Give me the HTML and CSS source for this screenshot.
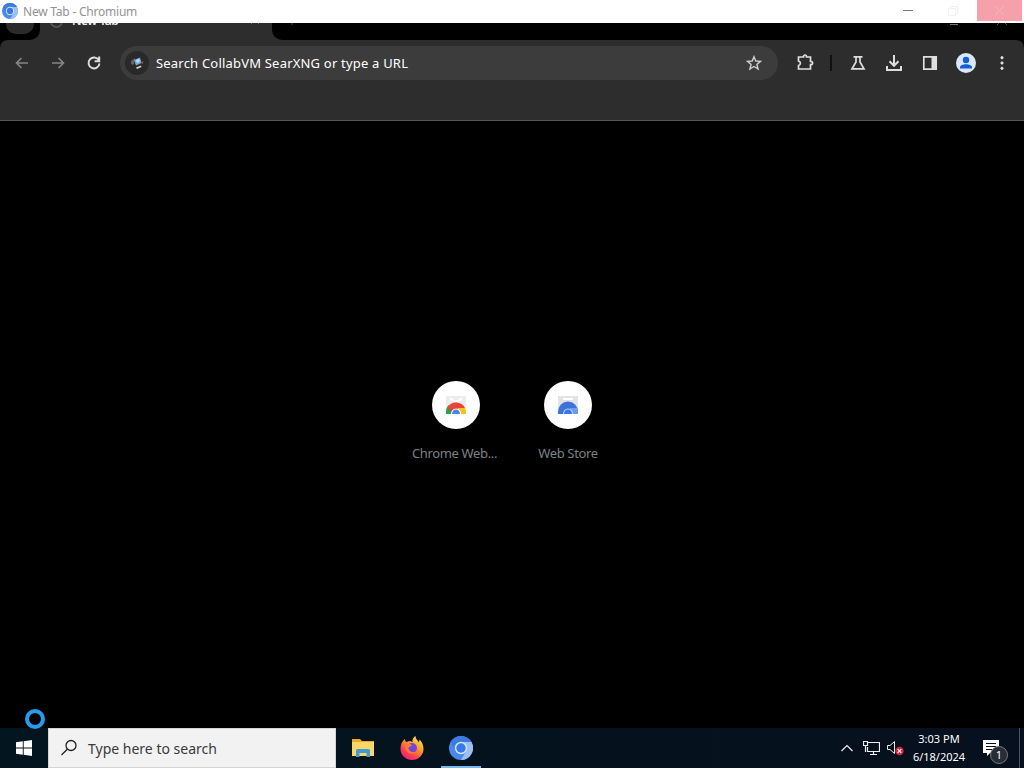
FILE: index.html
```html
<!DOCTYPE html>
<html>
<head>
    <meta charset="utf-8">
    <title>New Tab - Chromium</title>
    <link rel="stylesheet" href="styles.css">
</head>
<body>
    <svg width="0" height="0" class="defs">
        <symbol id="chromium" viewBox="0 0 24 24">
            <circle cx="12" cy="12" r="12" fill="#4a88ea" />
            <path d="M12 6H22.4A12 12 0 0 1 12 24L17.2 15Z" fill="#9dbff6" />
            <path d="M1.6 6A12 12 0 0 1 22.4 6H12L6.8 15Z" fill="#3c7be2" />
            <circle cx="12" cy="12" r="6.2" fill="#d5e4fc" />
            <circle cx="12" cy="12" r="4.7" fill="#347ae8" />
        </symbol>
    </svg>
    <div class="titlebar">
        <svg class="app-icon"><use href="#chromium" /></svg>
        <span class="title">New Tab - Chromium</span>
        <div class="controls">
            <svg class="min" viewBox="0 0 46 22"><path d="M18 10.500H28" stroke="#777" /></svg>
            <svg class="max" viewBox="0 0 46 22"><path d="M17.500 8.500H24.500V15.500H17.500ZM19.500 8V6.500H26.500V13.500H25" fill="none" stroke="#f0f0f0" /></svg>
            <svg class="close" viewBox="0 0 45 21"><path d="M18 6L27 15M27 6L18 15" stroke="#f3b6bd" /></svg>
        </div>
    </div>
    <div class="tabstrip">
        <div class="strip-left"><div class="tab-search"></div></div>
        <div class="tab">
            <div class="favicon"></div>
            <span class="tab-title">New Tab</span>
            <svg class="tab-close" viewBox="0 0 12 12"><path d="M1 1L3 -1M7 -1L9 1" stroke="#777" /></svg>
        </div>
        <div class="strip-right">
            <svg viewBox="0 0 752 17"><path d="M20 0V2" stroke="#555" /><path d="M678 1.500H686" stroke="#777" /><path d="M725 2L727 0M733 0L735 2" stroke="#555" /></svg>
        </div>
    </div>
    <div class="toolbar">
        <div class="row">
            <svg class="icon dim" viewBox="0 0 16 16"><path d="M14 8H2.500M7.500 3L2.500 8L7.500 13" /></svg>
            <svg class="icon dim" viewBox="0 0 16 16"><path d="M2 8H13.500M8.500 3L13.500 8L8.500 13" /></svg>
            <svg class="icon reload" viewBox="0 0 16 16"><path d="M12.700 5A5.500 5.500 0 1 0 13.500 8.500M13.200 1.500V6.200H8.600" /></svg>
            <div class="omnibox">
                <div class="engine">
                    <svg viewBox="0 0 16 16">
                        <path d="M2 6L6 3L5 9L3 10Z" fill="#596575" />
                        <path d="M5 5L11 2.500L12.500 8L7 10.500Z" fill="#78aad8" />
                        <path d="M7 5L10 4L11 6L8 8Z" fill="#c4dff2" />
                        <path d="M1.500 7L4 8L3 9.500ZM12 7.500L14.500 6L13.500 9Z" fill="#b65e2c" />
                        <path d="M7 12.500L12 10.500L12.500 12L8 14Z" fill="#d8d2bb" />
                    </svg>
                </div>
                <span class="hint">Search CollabVM SearXNG or type a URL</span>
                <svg class="star" viewBox="0 0 16 16"><path d="M8 1.700L9.800 6L14.500 6.400L10.900 9.400L12.100 14L8 11.500L3.900 14L5.100 9.400L1.500 6.400L6.200 6Z" /></svg>
            </div>
            <svg class="icon ext" viewBox="0 0 18 18"><path d="M3.500 4H7.500C7.500 1.300 10.500 1.300 10.500 4H14.500V8.300C17.300 8.300 17.300 11.700 14.500 11.700V16H2.500V12.500C5 12 5 8.500 2.500 8V4Z" /></svg>
            <div class="divider"></div>
            <svg class="icon flask" viewBox="0 0 16 16"><path d="M3.500 1.800H12.500M6 2V7L2 13.800H14L10 7V2" /></svg>
            <svg class="icon download" viewBox="0 0 18 18"><path d="M9 1V11.500M4.500 7.300L9 11.800L13.500 7.300M2 12V16H16V12" /></svg>
            <svg class="icon panel" viewBox="0 0 16 16"><path d="M1.800 1.800H14.200V14.200H1.800Z" /><path d="M9.500 2H14V14H9.500Z" fill="#dedede" stroke="none" /></svg>
            <svg class="avatar" viewBox="0 0 20 20">
                <circle cx="10" cy="10" r="10" fill="#dce7fd" />
                <circle cx="10" cy="7" r="3.200" fill="#1260d2" />
                <path d="M4 15.500V14.200C4 10.300 16 10.300 16 14.200V15.500Z" fill="#1260d2" />
            </svg>
            <svg class="icon dots" viewBox="0 0 16 16"><circle cx="8" cy="2.700" r="1.200" /><circle cx="8" cy="8" r="1.200" /><circle cx="8" cy="13.300" r="1.200" /></svg>
        </div>
    </div>
    <div class="page">
        <div class="tile">
            <div class="tile-icon">
                <svg viewBox="0 0 24 24">
                    <path d="M2 3H22V21H2Z" fill="#ececec" />
                    <path d="M7 5C7 9 17 9 17 5" fill="none" stroke="#fff" stroke-width="2" />
                    <path d="M2 21V18A10 10 0 0 1 4.500 12L10 21Z" fill="#2ba24c" />
                    <path d="M3.500 14.500A10 10 0 0 1 21 15L12 16L7.500 19Z" fill="#e94435" />
                    <path d="M14 15H21A10 10 0 0 1 22 21H14Z" fill="#fbc116" />
                    <path d="M7 21A5 5.500 0 0 1 17 21Z" fill="#fff" />
                    <path d="M8 21A4 4.500 0 0 1 16 21Z" fill="#4285f4" />
                </svg>
            </div>
            <span class="tile-name first">Chrome Web...</span>
        </div>
        <div class="tile">
            <div class="tile-icon">
                <svg viewBox="0 0 24 24">
                    <path d="M2 3H22V21H2Z" fill="#e3e3e3" />
                    <path d="M7 5H17V7H7Z" fill="#fff" />
                    <path d="M2 21V19A10 10.500 0 0 1 22 19V21Z" fill="#3c74dd" />
                    <path d="M14 15H21A10 10 0 0 1 22 21H14Z" fill="#6d9df0" />
                    <path d="M7 21A5 5.500 0 0 1 17 21Z" fill="#bcd5fb" />
                    <path d="M8 21A4 4.500 0 0 1 16 21Z" fill="#3978e6" />
                </svg>
            </div>
            <span class="tile-name">Web Store</span>
        </div>
        <div class="busy"></div>
    </div>
    <div class="taskbar">
        <div class="start">
            <svg viewBox="0 0 16 16"><path d="M0 2.300L6.800 1.300V7.500H0ZM7.700 1.200L16 0V7.500H7.700ZM0 8.400H6.800V14.700L0 13.700ZM7.700 8.400H16V16L7.700 14.800Z" /></svg>
        </div>
        <div class="search">
            <svg viewBox="0 0 18 18"><circle cx="11" cy="6.500" r="5" /><path d="M7.300 10.300L1.500 16" /></svg>
            <span>Type here to search</span>
        </div>
        <div class="apps">
            <div class="app">
                <svg class="explorer" viewBox="0 0 22 20">
                    <path d="M0 1H8L10 3H22V18H0Z" fill="#e9ac25" />
                    <path d="M0 4H22V18H0Z" fill="#fcd765" />
                    <path d="M4 19V12.500Q4 11 5.500 11H16.500Q18 11 18 12.500V19H14.500V15H7.500V19Z" fill="#3e9bd6" />
                </svg>
            </div>
            <div class="app">
                <svg class="firefox" viewBox="0 0 24 24">
                    <defs><linearGradient id="fox" x1=".85" y1="0" x2=".2" y2="1"><stop offset="0" stop-color="#fff04b" /><stop offset=".4" stop-color="#ff9b2b" /><stop offset=".75" stop-color="#fb3b55" /><stop offset="1" stop-color="#e51f83" /></linearGradient></defs>
                    <path d="M3 5L4.500 3L6 6L10 5L12.500 6C12 3.500 13.500 1 15.500 0C15.500 3 17.500 4 19 6.500L19.500 3.500C22 6 23.500 9 23.500 13A11.500 11 0 0 1 .5 13C.5 10 1 7 3 5Z" fill="url(#fox)" />
                    <circle cx="12" cy="12" r="5" fill="#7545d6" />
                    <path d="M5 7.500L10.500 8L12 9.500L8.500 11.500C8 15 12 17 16 15.500C14 19 6 18 5.500 13Z" fill="#ff7a35" />
                </svg>
            </div>
            <div class="app active"><svg class="cr"><use href="#chromium" /></svg></div>
        </div>
        <div class="tray">
            <svg class="chevron" viewBox="0 0 12 8"><path d="M.5 7L6 1.500L11.500 7" /></svg>
            <svg class="network" viewBox="0 0 17 16"><path d="M5 2.500H16.500V11.500H4.500V7M10.500 11.500V14.500M7 14.500H14M.5 1.500H4.500V5.500H.5ZM2.500 5.500V12" /></svg>
            <svg class="volume" viewBox="0 0 18 16">
                <path d="M.5 5.500H3L7.500 1.500V13.500L3 9.500H.5Z" fill="none" stroke="#e8e8e8" />
                <circle cx="12.500" cy="11" r="4.200" fill="#d9253a" />
                <path d="M10.700 9.200L14.300 12.800M14.300 9.200L10.700 12.800" stroke="#fff" stroke-width="1.200" />
            </svg>
            <div class="clock"><span class="time">3:03 PM</span><span class="date">6/18/2024</span></div>
            <div class="notify">
                <svg viewBox="0 0 16 16"><path d="M0 0H16V13H7L4 16V13H0Z" fill="#fff" /><path d="M3 3.500H13M3 6.500H13M3 9.500H9" stroke="#07101e" /></svg>
                <span class="badge">1</span>
            </div>
            <div class="peek"></div>
        </div>
    </div>
</body>
</html>
```
FILE: styles.css
```css
body {
    margin: 0;
    width: 1024px;
    height: 768px;
    overflow: hidden;
    display: flex;
    flex-direction: column;
    background: #000;
    font-family: "Noto Sans", "Open Sans", sans-serif;
}

svg {
    display: block;
    flex: none;
}

.defs {
    position: absolute;
}

.titlebar {
    height: 23px;
    flex: none;
    display: flex;
    background: #fff;
}

.app-icon {
    width: 16px;
    height: 16px;
    margin: 3px 5px 0 2px;
}

.title {
    font-size: 12px;
    line-height: 23px;
    letter-spacing: -0.22px;
    color: #929292;
    white-space: nowrap;
}

.controls {
    display: flex;
    margin-left: auto;
    padding-right: 2px;
}

    .controls svg {
        width: 46px;
        height: 22px;
    }

    .controls .close {
        width: 45px;
        height: 21px;
        background: #f6a0ac;
    }

.tabstrip {
    height: 17px;
    flex: none;
    display: flex;
    background: #2d2d2d;
    overflow: hidden;
}

.strip-left {
    width: 40px;
    background: #000;
    border-bottom-right-radius: 10px;
}

.tab-search {
    width: 28px;
    height: 11px;
    margin-left: 6px;
    background: #2a2a2a;
    border-radius: 0 0 10px 10px;
}

.tab {
    width: 232px;
    display: flex;
}

.favicon {
    width: 9px;
    height: 9px;
    margin: -8px 9px 0 10px;
    border: 2px solid #555;
    border-radius: 50%;
}

.tab-title {
    font-size: 12px;
    font-weight: 600;
    line-height: 16px;
    letter-spacing: -0.5px;
    margin-top: -10px;
    color: #f0f0f0;
}

.tab-close {
    width: 12px;
    height: 12px;
    margin: 0 10px 0 auto;
}

.strip-right {
    flex: 1;
    background: #000;
    border-bottom-left-radius: 10px;
}

.toolbar {
    height: 80px;
    flex: none;
    background: #2d2d2d;
    border-bottom: 1px solid #555;
    border-radius: 8px 8px 0 0;
}

.row {
    display: flex;
    align-items: center;
    height: 46px;
    padding-left: 14px;
}

.icon {
    width: 16px;
    height: 16px;
    fill: none;
    stroke: #dedede;
    stroke-width: 1.7;
}

.dim {
    stroke: #858585;
    margin-right: 20px;
}

.reload {
    margin-right: 18px;
    stroke-width: 2;
}

.omnibox {
    width: 658px;
    height: 34px;
    display: flex;
    align-items: center;
    border-radius: 17px;
    background: #3c3c3c;
}

.engine {
    width: 24px;
    height: 24px;
    margin: 0 7px 0 5px;
    display: flex;
    align-items: center;
    justify-content: center;
    border-radius: 50%;
    background: #292929;
}

    .engine svg {
        width: 16px;
        height: 16px;
    }

.hint {
    font-size: 13px;
    letter-spacing: 0.2px;
    color: #fff;
    white-space: nowrap;
}

.star {
    width: 16px;
    height: 16px;
    margin: 0 16px 0 auto;
    fill: none;
    stroke: #cfcfcf;
    stroke-width: 1.4;
}

.ext {
    width: 18px;
    height: 18px;
    margin: -2px 0 0 18px;
}

.divider {
    width: 2px;
    height: 16px;
    margin: 0 18px 0 16px;
    background: #111;
}

.flask {
    margin-right: 19px;
}

.download {
    width: 18px;
    height: 18px;
    margin-right: 19px;
    stroke-width: 2;
}

.panel {
    margin-right: 18px;
}

.avatar {
    width: 20px;
    height: 20px;
    margin-right: 18px;
}

.dots {
    fill: #dedede;
    stroke-width: 0.8;
}

.page {
    position: relative;
    flex: 1;
    display: flex;
    justify-content: center;
    padding-top: 260px;
    background: #000;
}

.tile {
    width: 112px;
    display: flex;
    flex-direction: column;
    align-items: center;
}

.tile-icon {
    width: 48px;
    height: 48px;
    display: flex;
    align-items: center;
    justify-content: center;
    border-radius: 50%;
    background: #fff;
}

    .tile-icon svg {
        width: 24px;
        height: 24px;
    }

.tile-name {
    margin-top: 14px;
    font-size: 13px;
    line-height: 20px;
    letter-spacing: -0.35px;
    color: #7c8186;
    white-space: nowrap;
}

.first {
    margin-left: -3px;
}

/* busy cursor */
.busy {
    position: absolute;
    left: 25px;
    bottom: -1px;
    width: 12px;
    height: 12px;
    border: 4px solid #259cec;
    border-radius: 50%;
    z-index: 1;
}

.taskbar {
    height: 40px;
    flex: none;
    display: flex;
    background: linear-gradient(90deg, #03151e, #04121d 50%, #07101e);
}

.start {
    width: 48px;
    display: flex;
    align-items: center;
    justify-content: center;
}

    .start svg {
        width: 16px;
        height: 16px;
        fill: #fff;
    }

.search {
    box-sizing: border-box;
    width: 288px;
    display: flex;
    align-items: center;
    padding-left: 11px;
    background: #f2f2f2;
    border: 1px solid #d4d4d4;
    font-size: 14px;
    color: #3a3a3a;
}

    .search svg {
        width: 18px;
        height: 18px;
        margin-right: 10px;
        fill: none;
        stroke: #222;
        stroke-width: 1.3;
    }

.apps {
    display: flex;
    padding-left: 7px;
}

.app {
    box-sizing: border-box;
    width: 40px;
    height: 40px;
    margin-right: 9px;
    display: flex;
    align-items: center;
    justify-content: center;
}

.active {
    border-bottom: 2px solid #76b9ed;
    padding-top: 2px;
}

.explorer {
    width: 22px;
    height: 20px;
}

.firefox, .cr {
    width: 24px;
    height: 24px;
}

.tray {
    display: flex;
    align-items: center;
    margin-left: auto;
    color: #fff;
}

.chevron {
    width: 12px;
    height: 8px;
    margin-right: 10px;
}

.network {
    width: 17px;
    height: 16px;
    margin-right: 7px;
}

.chevron, .network {
    fill: none;
    stroke: #eee;
    stroke-width: 1.2;
}

.volume {
    width: 18px;
    height: 16px;
    margin-right: 7px;
}

.clock {
    width: 54px;
    display: flex;
    flex-direction: column;
    align-items: center;
    font-size: 11px;
    line-height: 18px;
    white-space: nowrap;
}

.notify {
    position: relative;
    margin: 0 20px 0 17px;
}

    .notify svg {
        width: 16px;
        height: 16px;
    }

.badge {
    position: absolute;
    left: 7px;
    top: 6px;
    width: 16px;
    height: 16px;
    border: 1px solid #777;
    border-radius: 50%;
    background: #262d36;
    font-size: 11px;
    line-height: 16px;
    text-align: center;
}

.peek {
    width: 4px;
    height: 40px;
    border-left: 1px solid #4b535e;
}
```
